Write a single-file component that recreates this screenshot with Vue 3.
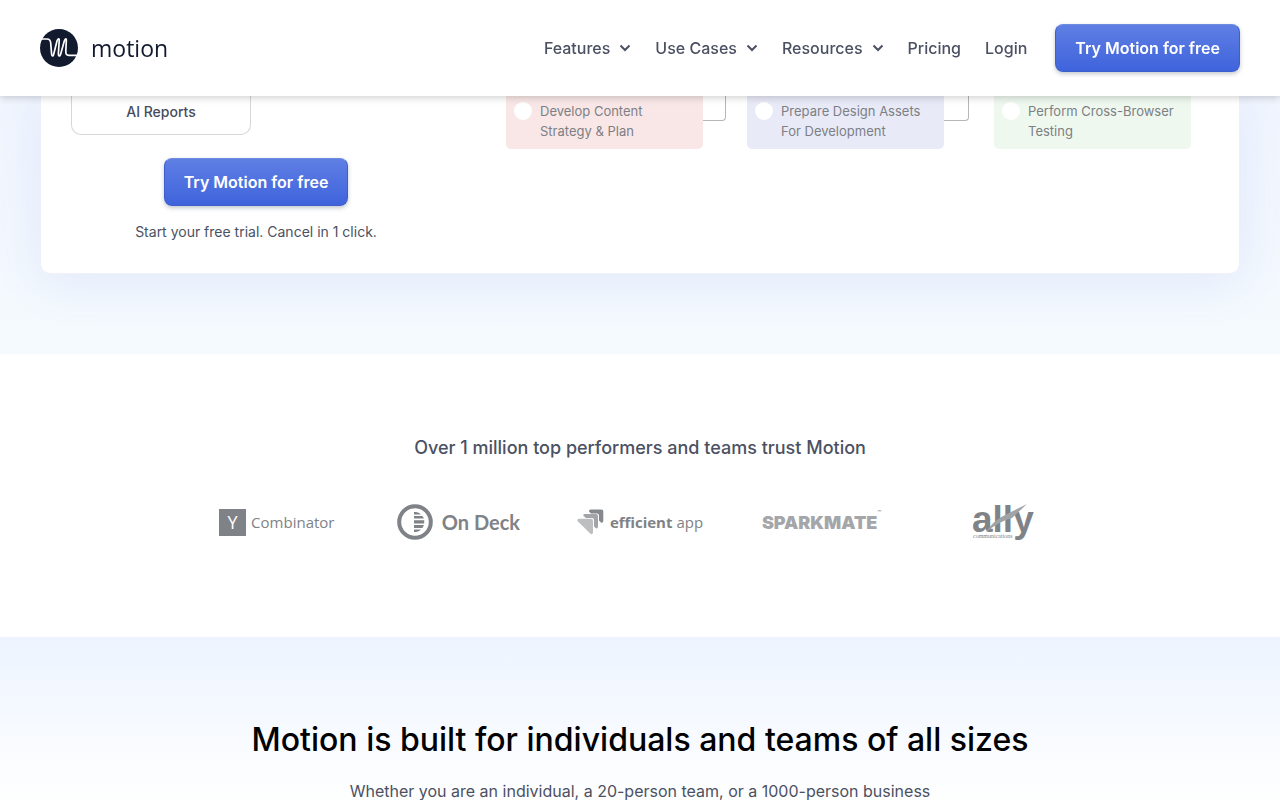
<template>
  <div class="page">
    <header class="header">
      <a href="#" class="brand">
        <svg class="brand-mark" viewBox="0 0 38 38" aria-hidden="true">
          <circle cx="19" cy="19" r="19" fill="#121a2e" />
          <path
            d="M1 10 H7 C10 10 10.5 11.5 10.7 14 L11.5 24 C11.8 28 13.2 28 14 24 L17 12 C18 9 19.5 9 19.2 12 L18.4 24 C18.2 28 20 28 21 24 L24.3 12 C25.3 9 26.5 9 26.3 12 L25.8 22 C25.7 25 26.3 26.3 29 26.3 H37"
            fill="none"
            stroke="#fff"
            stroke-width="1.7"
            stroke-linecap="round"
            stroke-linejoin="round"
          />
        </svg>
        <span class="brand-name">motion</span>
      </a>
      <nav class="nav">
        <button v-for="item in menus" :key="item" type="button" class="nav-item">
          {{ item }}
          <svg class="chevron" viewBox="0 0 12 8" aria-hidden="true">
            <path d="M1.5 1.5 L6 6 L10.5 1.5" fill="none" stroke="currentColor" stroke-width="2" />
          </svg>
        </button>
        <a v-for="item in links" :key="item" href="#" class="nav-item">{{ item }}</a>
        <button type="button" class="cta">Try Motion for free</button>
      </nav>
    </header>

    <main>
      <section class="hero">
        <div class="hero-card">
          <div class="intro">
            <div class="feature">AI Reports</div>
            <button type="button" class="cta">Try Motion for free</button>
            <p class="trial">Start your free trial. Cancel in 1 click.</p>
          </div>
          <div class="board">
            <template v-for="task in tasks" :key="task.label">
              <label class="task" :class="task.color">
                <input type="checkbox" class="task-check" />
                <span>{{ task.label }}</span>
              </label>
              <span v-if="task.linked" class="connector"></span>
            </template>
          </div>
        </div>
      </section>

      <section class="trust">
        <p class="trust-title">Over 1 million top performers and teams trust Motion</p>
        <div class="logos">
          <div class="logo ycombinator">
            <span class="yc-mark">Y</span>
            <span>Combinator</span>
          </div>
          <div class="logo ondeck">
            <svg class="ondeck-mark" viewBox="0 0 36 36" aria-hidden="true">
              <circle cx="18" cy="18" r="15.8" fill="none" stroke="#7f8286" stroke-width="4" />
              <path
                d="M17 8 H19 Q22 8.4 24 10.4 H17 Z M17 12 H25.3 Q26.4 13.2 26.8 14.6 H17 Z M17 16.2 H27.2 V19.4 H17 Z M17 21 H26.8 Q26.3 22.8 25.3 24 H17 Z M17 25.6 H24 Q22 27.8 19 28 H17 Z"
                fill="#7f8286"
              />
            </svg>
            <span>On Deck</span>
          </div>
          <div class="logo efficient">
            <svg class="efficient-mark" viewBox="0 0 27 26" aria-hidden="true">
              <path d="M13.5 0.5 H24.5 Q26.3 0.5 26.3 2.3 V12 Q26 14.5 24 13.5 L22 11.5 V6.5 Q22 4.5 20 4.5 H14 L12 2.5 Q11.5 .8 13.5 .5Z" fill="#85888c" />
              <path d="M7.5 5 H19 Q21 5 21 7 V18 Q20.3 20.5 18.2 18.7 L17 17.3 V11 Q17 9 15 9 H9 L6.5 7 Q5.5 5.4 7.5 5Z" fill="#a2a4a7" />
              <path d="M1.5 9.7 H14 Q16 9.7 16 11.7 V24 Q15.2 26 13.2 24.5 L.8 12.2 Q-.2 10.3 1.5 9.7Z" fill="#bcbec0" />
            </svg>
            <span><b>efficient</b> app</span>
          </div>
          <div class="logo sparkmate">SPARKMATE<sup>™</sup></div>
          <div class="logo ally">
            <svg class="ally-art" viewBox="0 0 64 42" role="img" aria-label="ally communications">
              <text x="1" y="31" class="ally-name">ally</text>
              <path d="M15 31 Q23 19 34 14 L56 3 L41 17 Q29 20 15 31Z" fill="#a0a2a5" />
              <text x="2" y="37" class="ally-sub">communications</text>
            </svg>
          </div>
        </div>
      </section>

      <section class="sizes">
        <h2>Motion is built for individuals and teams of all sizes</h2>
        <p>Whether you are an individual, a 20-person team, or a 1000-person business</p>
      </section>
    </main>
  </div>
</template>

<script setup>
const menus = ['Features', 'Use Cases', 'Resources']
const links = ['Pricing', 'Login']

const tasks = [
  { label: 'Develop Content Strategy & Plan', color: 'red', linked: true },
  { label: 'Prepare Design Assets For Development', color: 'blue', linked: true },
  { label: 'Perform Cross-Browser Testing', color: 'green', linked: false },
]
</script>

<style>
body {
  margin: 0;
  background: #fff;
}
</style>

<style scoped>
.page {
  height: 100vh;
  overflow: hidden;
  font-family: Inter, 'Liberation Sans', sans-serif;
  color: #4b5162;
}

.page * {
  box-sizing: border-box;
}

p,
h2 {
  margin: 0;
}

button {
  font-family: inherit;
  cursor: pointer;
}

.header {
  position: sticky;
  top: 0;
  z-index: 10;
  display: flex;
  align-items: center;
  justify-content: space-between;
  height: 96px;
  padding: 0 40px;
  background: #fff;
  box-shadow: 0 1px 8px rgba(0, 0, 0, 0.22);
}

.brand {
  display: flex;
  align-items: center;
  gap: 13px;
  color: #121a2e;
  text-decoration: none;
}

.brand-mark {
  width: 38px;
  height: 38px;
}

.brand-name {
  font-family: 'Open Sans', 'Noto Sans', sans-serif;
  font-size: 23px;
  line-height: 32px;
}

.nav {
  display: flex;
  align-items: center;
  gap: 24px;
}

.nav .cta {
  margin-left: 4px;
}

.nav-item {
  display: flex;
  align-items: center;
  gap: 9px;
  padding: 0;
  border: 0;
  background: none;
  color: #4b5162;
  font-size: 16px;
  font-weight: 500;
  line-height: 24px;
  text-decoration: none;
}

.chevron {
  width: 12px;
  height: 8px;
}

.cta {
  height: 48px;
  padding: 0 19px;
  border: 1px solid #3c5fcd;
  border-top-color: #6c8ce0;
  border-radius: 8px;
  background: linear-gradient(#5f7fe4, #3f63dc);
  box-shadow: 0 2px 4px rgba(20, 30, 60, 0.25);
  color: #fff;
  font-size: 16px;
  font-weight: 600;
  line-height: 24px;
  white-space: nowrap;
}

.hero {
  padding: 0 40px 80px;
  background: linear-gradient(#f0f5fe, #f5fafe);
}

.hero-card {
  display: flex;
  align-items: flex-start;
  gap: 65px;
  padding: 0 30px 31px;
  border: 1px solid #eef1f8;
  border-top: 0;
  border-radius: 0 0 10px 10px;
  background: #fff;
  box-shadow: 0 8px 50px rgba(80, 110, 220, 0.11);
}

.intro {
  display: flex;
  flex: 0 0 370px;
  flex-direction: column;
  align-items: center;
}

.feature {
  align-self: flex-start;
  width: 180px;
  height: 39px;
  margin-bottom: 23px;
  padding-top: 6px;
  border: 1px solid #d5d6da;
  border-top: 0;
  border-radius: 0 0 10px 10px;
  color: #464c5c;
  font-size: 14px;
  font-weight: 500;
  line-height: 20px;
  text-align: center;
}

.trial {
  margin-top: 16px;
  font-size: 14px;
  line-height: 20px;
}

.board {
  display: flex;
  align-items: flex-start;
}

.task {
  display: flex;
  flex: 0 0 197px;
  gap: 8px;
  height: 53px;
  padding: 5px 8px;
  border-radius: 0 0 5px 5px;
  color: #7d7f85;
  font-size: 13px;
  line-height: 20px;
}

.task.red {
  background: #f8e7e6;
}

.task.blue {
  background: #e8eaf7;
}

.task.green {
  background: #eef8ef;
}

.task-check {
  flex: none;
  width: 18px;
  height: 18px;
  margin: 1px 0 0;
  border-radius: 50%;
  background: #fff;
  appearance: none;
}

.connector {
  width: 23px;
  height: 25px;
  margin-right: 21px;
  border: 1px solid #b5b6ba;
  border-top: 0;
  border-left: 0;
  border-bottom-right-radius: 4px;
}

.connector:nth-of-type(2) {
  width: 25px;
  margin-right: 25px;
}

.trust {
  padding: 80px 40px 100px;
  background: #fff;
  text-align: center;
}

.trust-title {
  font-size: 18px;
  font-weight: 500;
  line-height: 28px;
}

.logos {
  display: grid;
  grid-template-columns: repeat(5, 1fr);
  max-width: 908px;
  height: 36px;
  margin: 39px auto 0;
}

.logo {
  display: flex;
  align-items: center;
  justify-content: center;
  color: #7f8286;
  white-space: nowrap;
}

.ycombinator {
  gap: 5px;
  font-family: 'Open Sans', 'Noto Sans', sans-serif;
  font-size: 15px;
}

.yc-mark {
  width: 27px;
  height: 27px;
  background: #7f8286;
  color: #fff;
  font-size: 18px;
  line-height: 27px;
}

.ondeck {
  gap: 9px;
  font-family: Lato, sans-serif;
  font-size: 20px;
  font-weight: 700;
}

.ondeck-mark {
  width: 36px;
  height: 36px;
}

.efficient {
  gap: 6px;
  font-family: 'Open Sans', sans-serif;
  font-size: 15px;
}

.efficient-mark {
  width: 27px;
  height: 26px;
}

.sparkmate {
  color: #a4a6a9;
  font-size: 18px;
  font-weight: 900;
}

.sparkmate sup {
  align-self: flex-start;
  margin-top: 8px;
  font-size: 6px;
  line-height: 8px;
}

.ally-art {
  width: 64px;
  height: 42px;
  overflow: visible;
}

.ally-name {
  fill: #7f8286;
  font-family: 'Liberation Sans', sans-serif;
  font-size: 37px;
  font-weight: 700;
}

.ally-sub {
  fill: #7f8286;
  font-family: 'Liberation Serif', serif;
  font-size: 6px;
}

.sizes {
  padding: 80px 40px;
  background: linear-gradient(#edf4ff, #fff 170px);
  text-align: center;
}

.sizes h2 {
  color: #000;
  font-size: 32px;
  font-weight: 500;
  line-height: 46px;
}

.sizes p {
  margin-top: 16px;
  font-size: 16px;
  line-height: 24px;
}
</style>
